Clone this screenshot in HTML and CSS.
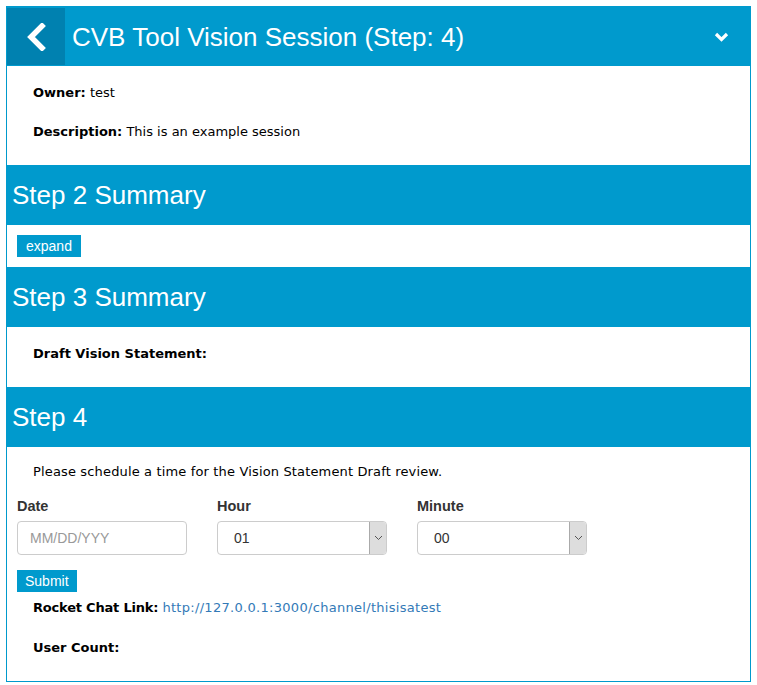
FILE: index.html
```html
<!DOCTYPE html>
<html>
<head>
<meta charset="utf-8">
<link rel="stylesheet" href="styles.css">
</head>
<body>
<div class="panel">
  <div class="topbar">
    <div class="back">
      <svg width="20" height="28" viewBox="0 0 20 28"><path d="M16 3 L5 14 L16 25" fill="none" stroke="#fff" stroke-width="5.5" stroke-linecap="square" stroke-linejoin="miter"/></svg>
    </div>
    <div class="title">CVB Tool Vision Session (Step: 4)</div>
    <div class="toggle">
      <svg width="15" height="10" viewBox="0 0 15 10"><path d="M2 2 L7.5 7.5 L13 2" fill="none" stroke="#fff" stroke-width="3.2"/></svg>
    </div>
  </div>
  <div class="info">
    <p class="line"><b>Owner:</b> test</p>
    <p class="line"><b>Description:</b> This is an example session</p>
  </div>
  <h2 class="band">Step 2 Summary</h2>
  <div class="expand-row"><button class="btn">expand</button></div>
  <h2 class="band">Step 3 Summary</h2>
  <div class="info draft">
    <p class="line"><b>Draft Vision Statement:</b></p>
  </div>
  <h2 class="band">Step 4</h2>
  <div class="step4">
    <p class="line prompt">Please schedule a time for the Vision Statement Draft review.</p>
    <div class="form-row">
      <div class="field">
        <label class="lbl">Date</label>
        <div class="input placeholder">MM/DD/YYY</div>
      </div>
      <div class="field">
        <label class="lbl">Hour</label>
        <div class="input select"><span>01</span><span class="arrow"><svg width="9" height="6" viewBox="0 0 9 6"><path d="M1 1 L4.5 4.5 L8 1" fill="none" stroke="#555" stroke-width="1"/></svg></span></div>
      </div>
      <div class="field">
        <label class="lbl">Minute</label>
        <div class="input select"><span>00</span><span class="arrow"><svg width="9" height="6" viewBox="0 0 9 6"><path d="M1 1 L4.5 4.5 L8 1" fill="none" stroke="#555" stroke-width="1"/></svg></span></div>
      </div>
    </div>
    <button class="btn submit">Submit</button>
    <p class="line link-line"><b>Rocket Chat Link:</b> <a href="#">http://127.0.0.1:3000/channel/thisisatest</a></p>
    <p class="line count"><b>User Count:</b></p>
  </div>
</div>
</body>
</html>
```
FILE: styles.css
```css
body {
  margin: 6px;
  background: #fff;
  font-family: "DejaVu Sans", Verdana, sans-serif;
  font-size: 13px;
  color: #000;
}
.panel {
  border: 1px solid #0099cc;
  border-top: none;
  width: 745px;
  height: 676px;
  box-sizing: border-box;
}
.topbar {
  background: #009acd;
  height: 60px;
  margin: 0 -1px;
  display: flex;
  align-items: stretch;
  padding: 2px 1px 1px 1px;
  box-sizing: border-box;
}
.back {
  width: 58px;
  background: #0081b0;
  display: flex;
  align-items: center;
  justify-content: center;
}
.title {
  flex: 1;
  color: #fff;
  font-family: "Liberation Sans", Arial, sans-serif;
  font-size: 26px;
  padding-left: 7px;
  display: flex;
  align-items: center;
  padding-top: 2px;
}
.toggle {
  width: 58px;
  display: flex;
  align-items: center;
  justify-content: center;
  padding-left: 4px;
}
.info {
  padding: 19px 26px 2px;
}
.line {
  margin: 0 0 23px;
  line-height: 16px;
}
.band {
  margin: 0 -1px;
  background: #009acd;
  color: #fff;
  font-family: "Liberation Sans", Arial, sans-serif;
  font-weight: normal;
  font-size: 26px;
  height: 60px;
  line-height: 60px;
  padding: 0 0 0 6px;
}
.expand-row {
  padding: 10px 10px 10px;
}
.btn {
  display: block;
  background: #009acd;
  color: #fff;
  border: none;
  font-family: "Liberation Sans", Arial, sans-serif;
  font-size: 14px;
  height: 22px;
  padding: 0 9px;
  margin: 0;
}
.draft {
  padding-top: 19px;
  padding-bottom: 2px;
}
.step4 {
  padding: 17px 10px 0;
}
.prompt {
  margin-left: 16px;
  margin-bottom: 18px;
  letter-spacing: 0.15px;
}
.form-row {
  display: flex;
  gap: 30px;
}
.field {
  width: 170px;
}
.lbl {
  display: block;
  font-family: "Liberation Sans", Arial, sans-serif;
  font-weight: bold;
  font-size: 14.5px;
  color: #333;
  margin-bottom: 7px;
  line-height: 16px;
}
.input {
  height: 34px;
  box-sizing: border-box;
  border: 1px solid #ccc;
  border-radius: 4px;
  font-family: "Liberation Sans", Arial, sans-serif;
  font-size: 14px;
  color: #333;
  display: flex;
  align-items: center;
  padding-left: 12px;
}
.placeholder {
  color: #999;
}
.select {
  justify-content: space-between;
  padding-left: 16px;
  overflow: hidden;
}
.arrow {
  width: 16px;
  height: 100%;
  background: #dddddd;
  border-left: 1px solid #aaa;
  display: flex;
  align-items: center;
  justify-content: center;
}
.submit {
  margin-top: 15px;
  padding: 0 8px;
  height: 22px;
}
.link-line {
  margin: 8px 0 24px 16px;
}
.link-line b {
  letter-spacing: -0.2px;
}
.link-line a {
  color: #337ab7;
  text-decoration: none;
  letter-spacing: 0.3px;
}
.count {
  margin-left: 16px;
}
```
